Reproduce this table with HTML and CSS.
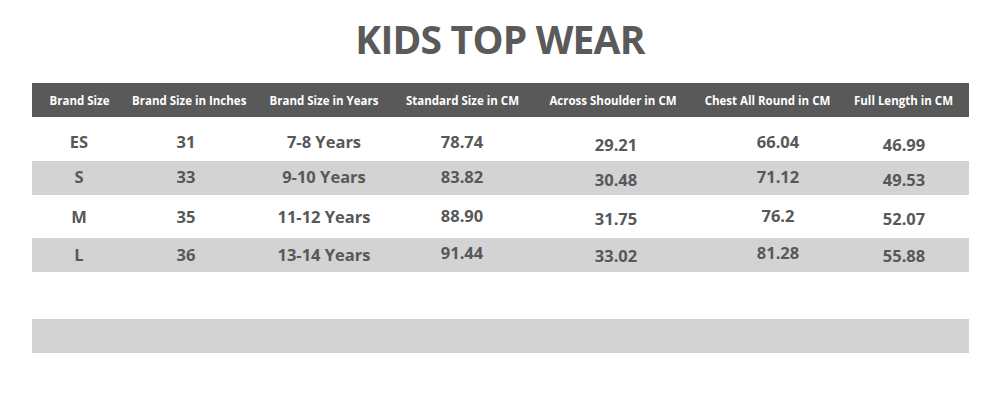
FILE: index.html
```html
<!DOCTYPE html>
<html>
<head>
<meta charset="utf-8">
<link rel="stylesheet" href="styles.css">
</head>
<body>
<div class="page">
  <h1 class="title">KIDS TOP WEAR</h1>
  <div class="table">
    <div class="row head">
      <div>Brand Size</div><div>Brand Size in Inches</div><div>Brand Size in Years</div><div>Standard Size in CM</div><div>Across Shoulder in CM</div><div>Chest All Round in CM</div><div>Full Length in CM</div>
    </div>
    <div class="row data r1">
      <div>ES</div><div>31</div><div>7-8 Years</div><div>78.74</div><div>29.21</div><div>66.04</div><div>46.99</div>
    </div>
    <div class="row data r2 gray">
      <div>S</div><div>33</div><div>9-10 Years</div><div>83.82</div><div>30.48</div><div>71.12</div><div>49.53</div>
    </div>
    <div class="row data r3 raised">
      <div>M</div><div>35</div><div>11-12 Years</div><div>88.90</div><div>31.75</div><div>76.2</div><div>52.07</div>
    </div>
    <div class="row data r4 gray raised">
      <div>L</div><div>36</div><div>13-14 Years</div><div>91.44</div><div>33.02</div><div>81.28</div><div>55.88</div>
    </div>
    <div class="row r5"></div>
    <div class="row r6 gray"></div>
  </div>
</div>
</body>
</html>
```
FILE: styles.css
```css
html, body {
  margin: 0;
  padding: 0;
  background: #ffffff;
}
body {
  font-family: "Open Sans", "Liberation Sans", sans-serif;
  color: #595959;
}
.page {
  width: 1000px;
  height: 400px;
  padding-top: 15px;
  box-sizing: border-box;
}
.title {
  margin: 0;
  text-align: center;
  font-size: 39px;
  line-height: 48px;
  font-weight: 700;
  color: #5a5a5a;
  letter-spacing: -0.8px;
}
.table {
  margin: 20px 0 0 32px;
  width: 937px;
}
.row {
  display: grid;
  grid-template-columns: 100px 122px 139px 145px 154px 144px 133px;
  align-items: center;
  text-align: center;
  font-weight: 700;
  font-size: 16.5px;
  color: #585858;
  box-sizing: border-box;
}
.row > div {
  white-space: nowrap;
  min-width: 0;
}
.head {
  background: #595959;
  color: #ffffff;
  font-size: 11.5px;
  height: 34px;
}
/* header label centring */
.head > div:nth-child(1) { padding-right: 5px; }
.head > div:nth-child(2) { padding-right: 16px; }
.head > div:nth-child(3) { padding-left: 1px; }
.head > div:nth-child(4) { padding-right: 6px; }
.head > div:nth-child(5) { padding-right: 4px; }
.head > div:nth-child(6) { padding-left: 7px; }
.head > div:nth-child(7) { padding-left: 2px; }
/* data value centring */
.data > div:nth-child(1) { padding-right: 6px; }
.data > div:nth-child(2) { padding-right: 14px; }
.data > div:nth-child(3) { padding-left: 1px; }
.data > div:nth-child(4) { padding-right: 7px; }
.data > div:nth-child(5) { padding-left: 2px; padding-top: 6px; }
.data > div:nth-child(6) { padding-left: 28px; }
.data > div:nth-child(7) { padding-left: 3px; padding-top: 6px; }
.raised > div:nth-child(4),
.raised > div:nth-child(6) { padding-bottom: 3px; }
.raised > div:nth-child(5),
.raised > div:nth-child(7) { padding-top: 3px; }

.gray { background: #d3d3d3; }
.r1 { height: 44px; padding-top: 5px; }
.r2 { height: 34px; padding-bottom: 4px; }
.r3 { height: 43px; }
.r4 { height: 34px; padding-bottom: 2px; }
.r5 { height: 47px; }
.r6 { height: 34px; }
```
